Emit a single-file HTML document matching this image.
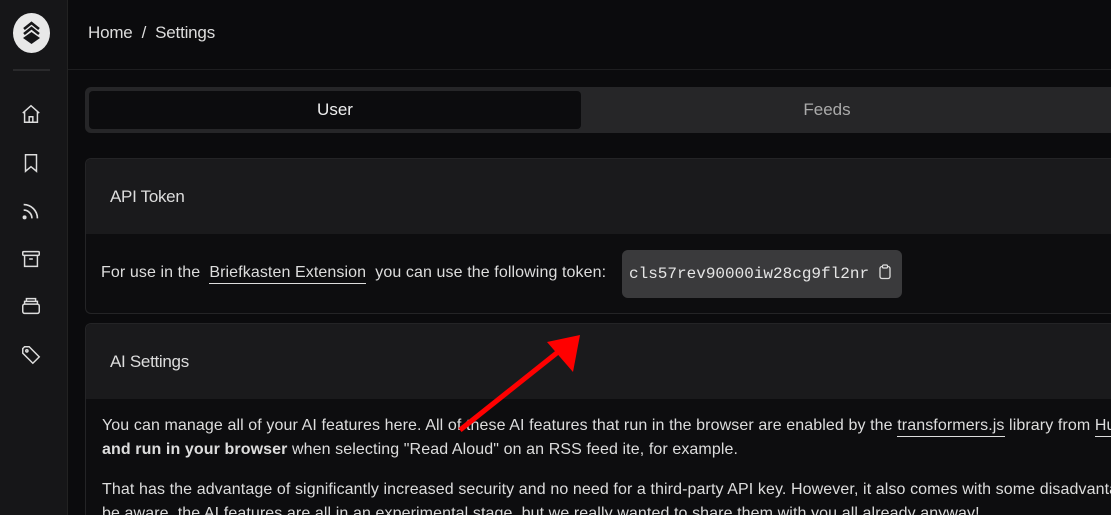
<!DOCTYPE html>
<html><head><meta charset="utf-8"><style>
*{margin:0;padding:0;box-sizing:border-box}
html,body{width:1111px;height:515px;overflow:hidden}
body{background:#0b0b0d;font-family:"Liberation Sans",sans-serif;color:#e6e6e6;position:relative}
.wrap{position:absolute;left:0;top:0;width:1111px;height:515px;overflow:hidden}
.side{position:absolute;left:0;top:0;width:68px;height:515px;background:#161618;border-right:1px solid #222}
.logo{position:absolute;left:13px;top:13px;width:37px;height:40px;border-radius:50%;background:#e8e8e8}
.sep{position:absolute;left:13px;top:69px;width:37px;height:2px;background:#2a2a2c}
.ic{position:absolute;left:20px;width:22px;height:22px}
.top{position:absolute;left:68px;top:0;right:0;height:70px;border-bottom:1px solid #1e1e20}
.crumb{position:absolute;left:88px;top:23px;font-size:17px;color:#ddd;letter-spacing:-0.2px}
.tabs{position:absolute;left:85px;top:87px;width:1040px;height:46px;background:#262628;border-radius:6px}
.tab1{position:absolute;left:4px;top:4px;width:492px;height:38px;background:#0c0c0e;border-radius:4px;text-align:center;line-height:38px;font-size:17px;color:#eee}
.tab2{position:absolute;left:496px;top:4px;width:492px;height:38px;text-align:center;line-height:38px;font-size:17px;color:#aaa}
.card{position:absolute;left:85px;width:1026px;border:1px solid #242426;border-right:none;border-radius:6px 0 0 6px;overflow:hidden;background:#0d0d0f}
.ch{height:75px;background:#1a1a1c;padding-left:24px;line-height:75px;font-size:17px;color:#ddd;letter-spacing:-0.3px}
.tok{position:absolute;left:536px;top:91px;width:280px;height:48px;background:#3a3a3c;border-radius:6px;font-family:"Liberation Mono",monospace;font-size:16px;color:#e6e6e6;line-height:48px;padding-left:7px}
.p{position:absolute;left:101px;font-size:16px;white-space:nowrap;letter-spacing:0.1px;color:#ddd}
u{text-decoration:none;border-bottom:1px solid #ddd;padding-bottom:2px}
</style></head><body>
<div class="wrap">
<div class="side">
<div class="logo"><svg width="37" height="40" viewBox="0 0 37 40"><path d="M11 16 L18.5 10 L26 16" fill="none" stroke="#161618" stroke-width="2.6"/><path d="M11 21 L18.5 15 L26 21" fill="none" stroke="#161618" stroke-width="2.6"/><path d="M10 25 L18.5 19 L27 25 L18.5 31 Z" fill="#161618"/></svg></div>
<div class="sep"></div>
<svg class="ic" style="top:103px" viewBox="0 0 24 24" fill="none" stroke="#ddd" stroke-width="1.6"><path d="M3 11 L12 3 L21 11 M5 9.5 V21 H19 V9.5 M10 21 V15 H14 V21"/></svg>
<svg class="ic" style="top:152px" viewBox="0 0 24 24" fill="none" stroke="#ddd" stroke-width="1.6"><path d="M6 3 H18 V21 L12 16 L6 21 Z"/></svg>
<svg class="ic" style="top:200px" viewBox="0 0 24 24" fill="none" stroke="#ddd" stroke-width="1.8"><path d="M4 11 A9 9 0 0 1 13 20 M4 5 A15 15 0 0 1 19 20"/><circle cx="5" cy="19" r="1.3" fill="#ddd"/></svg>
<svg class="ic" style="top:248px" viewBox="0 0 24 24" fill="none" stroke="#ddd" stroke-width="1.6"><rect x="3" y="4" width="18" height="4" rx="1"/><path d="M5 8 V20 H19 V8 M10 12 H14"/></svg>
<svg class="ic" style="top:295px" viewBox="0 0 24 24" fill="none" stroke="#ddd" stroke-width="1.6"><rect x="3" y="10" width="18" height="10" rx="2"/><path d="M5 10 V7 H19 V10 M7 7 V4 H17 V7"/></svg>
<svg class="ic" style="top:344px" viewBox="0 0 24 24" fill="none" stroke="#ddd" stroke-width="1.6"><path d="M3 5 V10 L14 21 L21 14 L10 3 H5 Z"/><circle cx="7.5" cy="7.5" r="1.2"/></svg>
</div>
<div class="top"></div>
<div class="crumb">Home&nbsp; / &nbsp;Settings</div>
<div class="tabs"><div class="tab1">User</div><div class="tab2">Feeds</div></div>
<div class="card" style="top:158px;height:156px"><div class="ch">API Token</div>
<div class="tok">cls57rev90000iw28cg9fl2nr <svg width="12" height="16" viewBox="0 0 12 16" style="vertical-align:-2px"><rect x="1" y="2.5" width="10" height="12" rx="2" fill="none" stroke="#ddd" stroke-width="1.3"/><rect x="3.5" y="1" width="5" height="3" rx="1" fill="#3a3a3c" stroke="#ddd" stroke-width="1.2"/></svg></div>
</div>
<div class="p" style="top:264px">For use in the&nbsp; <u>Briefkasten Extension</u>&nbsp; you can use the following token:</div>
<div class="card" style="top:323px;height:192px;border-bottom:none;border-radius:6px 0 0 0"><div class="ch">AI Settings</div>
<div class="p" style="left:16px;top:93px">You can manage all of your AI features here. All of these AI features that run in the browser are enabled by the <u>transformers.js</u> library from <u>Hugging</u></div>
<div class="p" style="left:16px;top:117px"><b>and run in your browser</b> when selecting "Read Aloud" on an RSS feed ite, for example.</div>
<div class="p" style="left:16px;top:157px">That has the advantage of significantly increased security and no need for a third-party API key. However, it also comes with some disadvantages</div>
<div class="p" style="left:16px;top:181px">be aware, the AI features are all in an experimental stage, but we really wanted to share them with you all already anyway!</div>
</div>
<svg style="position:absolute;left:0;top:0" width="1111" height="515"><line x1="460" y1="430" x2="558" y2="352" stroke="#f00" stroke-width="5"/><polygon points="580,335 547,342 573,372" fill="#f00"/></svg>
</div>
</body></html>
